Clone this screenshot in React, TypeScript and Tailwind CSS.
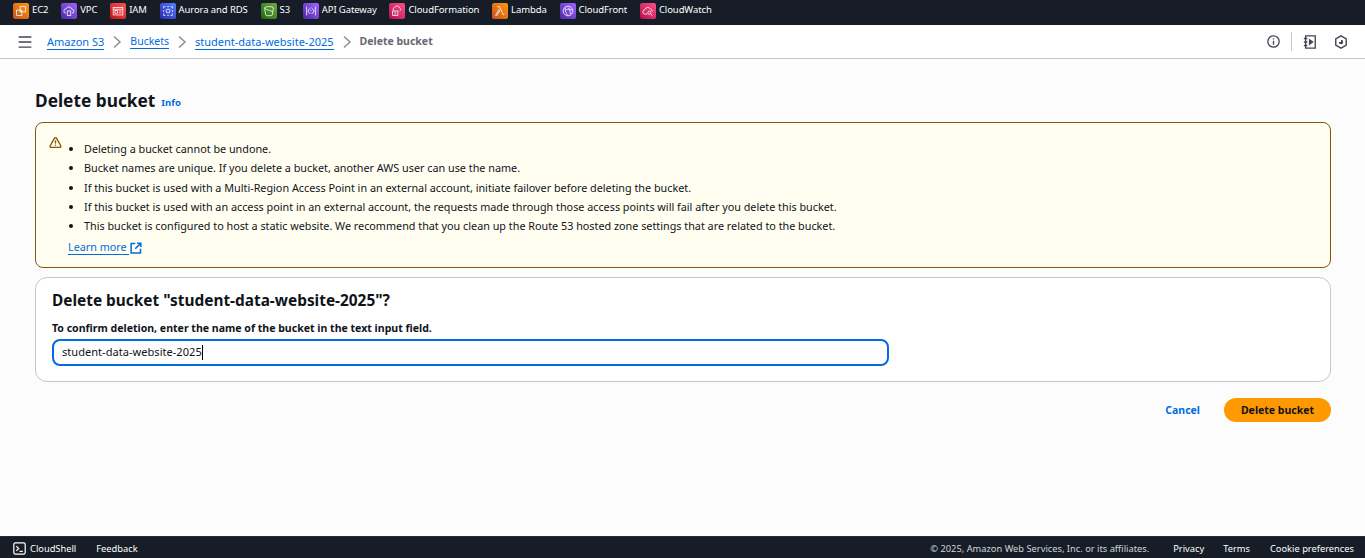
import type { ReactNode } from "react";
import { Menu, TriangleAlert } from "lucide-react";

const font = "font-['Noto_Sans',sans-serif]";

const services: { label: string; color: string; icon: ReactNode }[] = [
  {
    label: "EC2",
    color: "bg-gradient-to-tr from-[#c8511b] to-[#f90]",
    icon: (
      <>
        <rect x="3" y="7" width="6" height="6" />
        <rect x="7" y="3" width="6" height="6" />
      </>
    ),
  },
  {
    label: "VPC",
    color: "bg-gradient-to-tr from-[#4d27a8] to-[#a166ff]",
    icon: (
      <>
        <path d="M4.500 10.500a2.500 2.500 0 0 1 .3-5 3.300 3.300 0 0 1 6.300.4 2.300 2.300 0 0 1 .3 4.600" />
        <rect x="6" y="8" width="4" height="5" />
      </>
    ),
  },
  {
    label: "IAM",
    color: "bg-gradient-to-tr from-[#bd0816] to-[#ff5252]",
    icon: (
      <>
        <rect x="2.500" y="4" width="11" height="8.500" />
        <rect x="4.500" y="7.500" width="3" height="3" />
        <path d="M9 8h3M9 10h3M2.500 6h11" />
      </>
    ),
  },
  {
    label: "Aurora and RDS",
    color: "bg-gradient-to-tr from-[#2e27ad] to-[#527fff]",
    icon: (
      <>
        <rect x="6" y="6" width="4" height="4" rx="1" />
        <path d="M3 5V3h2M11 3h2v2M13 11v2h-2M5 13H3v-2M3 7v2M13 7v2M7 3h2M7 13h2" />
      </>
    ),
  },
  {
    label: "S3",
    color: "bg-gradient-to-tr from-[#1b660f] to-[#6cae3e]",
    icon: (
      <>
        <path d="M3 4.500c0-2 10-2 10 0l-1.200 8c-.4 1.300-7.200 1.300-7.600 0Z" />
        <path d="M3 4.500c1 1.500 4 2.500 9 4" />
      </>
    ),
  },
  {
    label: "API Gateway",
    color: "bg-gradient-to-tr from-[#4d27a8] to-[#a166ff]",
    icon: <path d="M3 3v10M13 3v10M6.500 5 4.500 8l2 3M9.500 5l2 3-2 3M8 4v1M8 7v1M8 10v1" />,
  },
  {
    label: "CloudFormation",
    color: "bg-gradient-to-tr from-[#b0084d] to-[#ff4f8b]",
    icon: (
      <>
        <path d="M5 8a2 2 0 0 1 .3-3.900 3 3 0 0 1 5.700.4A2 2 0 0 1 11 8" />
        <rect x="3" y="8" width="6" height="5" />
        <path d="M5 10h2M5 11.500h2" />
      </>
    ),
  },
  {
    label: "Lambda",
    color: "bg-gradient-to-tr from-[#c8511b] to-[#f90]",
    icon: <path d="M5 3h2.500l4 9H13M8 7l-3.500 6H3l4-7" />,
  },
  {
    label: "CloudFront",
    color: "bg-gradient-to-tr from-[#4d27a8] to-[#a166ff]",
    icon: (
      <>
        <circle cx="8" cy="8" r="5.500" />
        <path d="M5 4c-.5 3 0 6 3 9M8 4c2 2 3 4 2.500 8M5.500 7c2-1.500 4-1.500 7 0" />
      </>
    ),
  },
  {
    label: "CloudWatch",
    color: "bg-gradient-to-tr from-[#b0084d] to-[#ff4f8b]",
    icon: (
      <>
        <path d="M7 11.500H4.500a2.300 2.300 0 0 1-.3-4.600 3.600 3.600 0 0 1 6.800-.9 2.500 2.500 0 0 1 2 2.500" />
        <circle cx="9.500" cy="10" r="1.800" />
        <path d="m11 11.500 2 1.500" />
      </>
    ),
  },
];

const warnings = [
  "Deleting a bucket cannot be undone.",
  "Bucket names are unique. If you delete a bucket, another AWS user can use the name.",
  "If this bucket is used with a Multi-Region Access Point in an external account, initiate failover before deleting the bucket.",
  "If this bucket is used with an access point in an external account, the requests made through those access points will fail after you delete this bucket.",
  "This bucket is configured to host a static website. We recommend that you clean up the Route 53 hosted zone settings that are related to the bucket.",
];

function Chevron() {
  return (
    <svg viewBox="0 0 16 16" className="h-4 w-4 text-[#8c8c94]" fill="none" stroke="currentColor" strokeWidth="1.500">
      <path d="m5 2.500 6 5.500-6 5.500" />
    </svg>
  );
}

function Crumb({ children }: { children: ReactNode }) {
  return <a className="border-b border-[#006ce0] text-[#006ce0] leading-[15px]">{children}</a>;
}

export default function App() {
  return (
    <div className={`flex h-screen flex-col overflow-hidden bg-[#fcfcfd] text-[#0f141a] ${font}`}>
      {/* Favorites bar */}
      <nav className="flex h-[25px] items-center bg-[#161d26] pb-[3px] pl-[13px] text-[9.500px] tracking-[-0.1px] text-white">
        {services.map((s) => (
          <div key={s.label} className="mr-[12.800px] flex items-center gap-[3px]">
            <span className={`flex h-4 w-4 items-center justify-center rounded-[2px] ${s.color}`}>
              <svg viewBox="0 0 16 16" className="h-[14px] w-[14px]" fill="none" stroke="white" strokeWidth="0.900">
                {s.icon}
              </svg>
            </span>
            <span className="-mt-[1px]">{s.label}</span>
          </div>
        ))}
      </nav>

      {/* Breadcrumbs */}
      <header className="flex h-[34px] items-center border-b border-[#c6c6cd] bg-white pl-[18px] pr-[17px] text-[11px]">
        <Menu className="mr-[15px] h-[14px] w-[14px] scale-125 text-[#424650]" strokeWidth={2} />
        <div className="flex items-center gap-[5px]">
          <Crumb>Amazon S3</Crumb>
          <Chevron />
          <span className="text-[10.500px]">
            <Crumb>Buckets</Crumb>
          </span>
          <Chevron />
          <Crumb>student-data-website-2025</Crumb>
          <Chevron />
          <span className="text-[10.500px] font-bold text-[#656871]">Delete bucket</span>
        </div>
        <div className="ml-auto flex items-center text-[#424650]">
          <svg viewBox="0 0 16 16" className="h-[13px] w-[13px]" fill="none" stroke="currentColor" strokeWidth="1.600">
            <circle cx="8" cy="8" r="7" />
            <path d="M8 7v5M8 4v1.500" />
          </svg>
          <span className="mx-[11px] h-[19px] w-px bg-[#c6c6cd]" />
          <svg viewBox="0 0 16 16" className="h-[14px] w-[14px]" fill="none" stroke="currentColor" strokeWidth="1.500">
            <path d="M3 1h11v14H3zM1 4h4M1 8h4M1 12h4" />
            <path d="m7.500 5.500 3.500 2.500-3.500 2.500Z" fill="currentColor" />
          </svg>
          <svg viewBox="0 0 16 16" className="ml-[17px] h-[14px] w-[14px]" fill="none" stroke="currentColor" strokeWidth="1.600">
            <path d="m8 1 6 3.500v7L8 15l-6-3.500v-7Z" />
            <path d="M8 8V5.500A2.500 2.500 0 1 1 5.500 8Z" fill="currentColor" stroke="none" />
          </svg>
        </div>
      </header>

      {/* Page content */}
      <main className="flex-1 pl-[35px] pr-[34px] pt-[32px] text-[10.800px]">
        <div className="flex h-[20px] items-center">
          <h1 className="text-[17.300px] font-bold leading-[20px]">Delete bucket</h1>
          <a className="ml-[6px] mt-[4px] text-[9.500px] font-bold text-[#006ce0]">Info</a>
        </div>

        <div className="mt-[11px] flex h-[146px] rounded-[8px] border border-[#855900] bg-[#fffef0] pl-[13px] pt-[13px]">
          <TriangleAlert className="h-[13px] w-[13px] shrink-0 text-[#855900]" strokeWidth={2.500} />
          <div className="pl-[8px]">
            <ul className="list-disc pl-[14px] pt-[5px] text-[#0f141a]">
              {warnings.map((w) => (
                <li key={w} className="mb-[4.250px] leading-[15px]">
                  {w}
                </li>
              ))}
            </ul>
            <a className="-ml-[2px] mt-[3px] inline-flex items-center text-[#006ce0]">
              <span className="border-b border-[#006ce0] pr-[2px] leading-[14px]">Learn more</span>
              <svg viewBox="0 0 16 16" className="ml-px h-[12px] w-[12px]" fill="none" stroke="currentColor" strokeWidth="2">
                <path d="M7 2H1.500v12.500H14V9M9.500 1.500h5v5M14.500 1.500 7 9" />
              </svg>
            </a>
          </div>
        </div>

        <section className="mt-[9px] h-[105px] rounded-[12px] border border-[#c6c6cd] bg-white pl-[16px] pt-[14px]">
          <h2 className="text-[15.400px] font-bold leading-[18px]">Delete bucket "student-data-website-2025"?</h2>
          <label className="mt-[11px] block text-[10.550px] font-bold leading-[14px]">
            To confirm deletion, enter the name of the bucket in the text input field.
          </label>
          <div className="mt-[4px] flex h-[27px] w-[837px] items-center rounded-[8px] border-2 border-[#006ce0] pl-[8px] text-[11.100px]">
            student-data-website-2025
            <span className="h-[15px] w-px bg-black" />
          </div>
        </section>

        <div className="mt-[16px] flex items-center justify-end">
          <button className="mr-[24px] pt-[1px] text-[10.500px] font-bold text-[#006ce0]">Cancel</button>
          <button className="h-[24px] w-[107px] rounded-full bg-[#ff9900] pt-[1px] text-[10.500px] font-bold text-[#0f141a]">Delete bucket</button>
        </div>
      </main>

      {/* Footer */}
      <footer className="flex h-[22px] items-center border-t border-[#232b37] bg-[#161d26] pl-[13px] pr-[11px] pt-[2px] text-[9.300px] text-white">
        <svg viewBox="0 0 16 16" className="h-[13px] w-[13px]" fill="none" stroke="currentColor" strokeWidth="1.500">
          <rect x="1" y="1" width="14" height="14" rx="2" />
          <path d="m4 5 3 3-3 3M8 11.500h4" />
        </svg>
        <span className="ml-[4px]">CloudShell</span>
        <span className="ml-[20px]">Feedback</span>
        <span className="ml-auto text-[#d1d5db]">© 2025, Amazon Web Services, Inc. or its affiliates.</span>
        <span className="ml-[24px]">Privacy</span>
        <span className="ml-[19px]">Terms</span>
        <span className="ml-[20px]">Cookie preferences</span>
      </footer>
    </div>
  );
}
